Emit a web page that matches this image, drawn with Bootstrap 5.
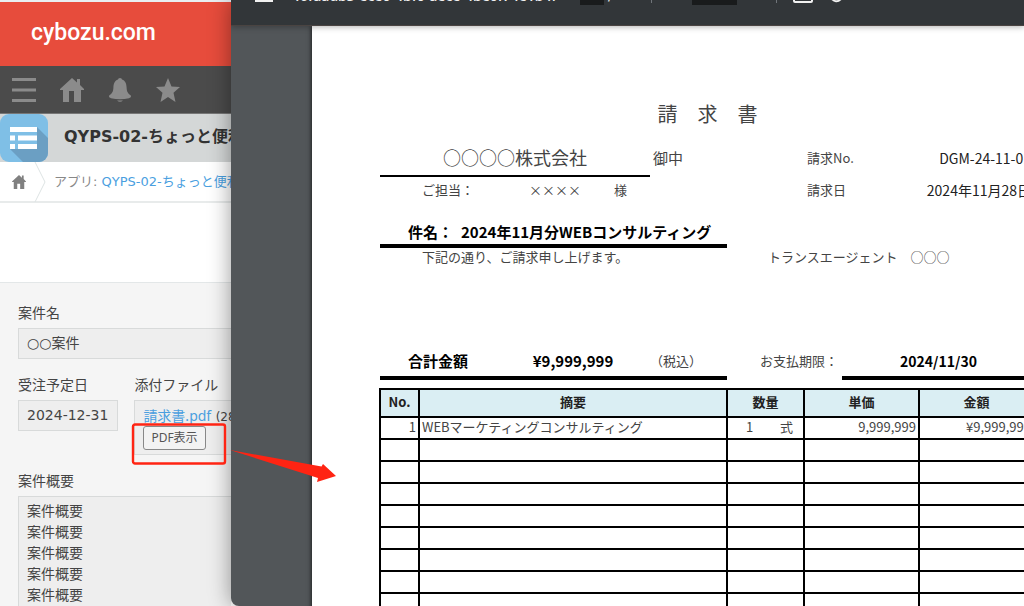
<!DOCTYPE html>
<html lang="ja">
<head>
<meta charset="utf-8">
<meta name="viewport" content="width=device-width, initial-scale=1">
<title>請求書 PDF表示</title>
<link href="https://cdn.jsdelivr.net/npm/bootstrap@5.3.0/dist/css/bootstrap.min.css" rel="stylesheet">
<style>
  body { font-family: "DejaVu Sans", "Noto Sans CJK JP", sans-serif; font-size: 14px; line-height: 21px; color: #333; }
  a { color: #4b9fdf; text-decoration: none; }

  /* app window behind */
  .app-pane { width: 231px; background: #fff; border-top: 2px solid #e9eef1; }
  .brand-bar { height: 64px; background: #e74c3c; font: 500 23px/62px Roboto, sans-serif; color: #fff; padding-left: 31px; }
  .icon-bar { height: 48px; background: #4b4b4b; border-bottom: 1px solid #777; padding-left: 12px; gap: 24px; }
  .icon-bar .btn, .icon-bar svg { width: 24px; height: 24px; display: block; }
  .title-bar { height: 48px; background: #d4d7d7; gap: 16px; }
  .title-bar h1 { font: 700 16px/24px "DejaVu Sans", "Noto Sans CJK JP", sans-serif; padding-bottom: 2px; }
  .crumbs { height: 41px; border-bottom: 2px solid #e8ebeb; font-size: 13px; color: #888; }
  .form-gap { height: 80px; border-bottom: 1px solid #e3e7e8; }
  .record { background: #f5f5f5; padding: 19px 0 0 18px; gap: 15px; color: #444; }
  .field-label { margin-bottom: 5px; font-family: "Noto Sans CJK JP", sans-serif; }
  .field-value { background: #eee; border: 1px solid #d8dada; padding: 4px 9px 4px 8px; }
  .field-value.wide { border-right: 0; }
  .file-row { height: 21px; }
  .file-link { font-family: "Noto Sans", "Noto Sans CJK JP", sans-serif; }
  .file-size { font-size: 12px; }
  .pdf-btn { display: block; height: 24px; padding: 0 7px; border: 1px solid #888; border-radius: 3px; background: #f3f3f3; color: #555; font: 12px/20px "Noto Sans", "Noto Sans CJK JP", sans-serif; }

  /* PDF viewer in front */
  .viewer { z-index: 1; background: #525659; border-radius: 0 0 0 8px; box-shadow: 0 0 22px rgba(0,0,0,.4); min-width: 0; }
  .viewer-bar { height: 56px; margin-top: -30px; background: #323639; border-bottom: 1px solid #4a4442; color: #f1f1f1; padding: 0 0 4px 24px; box-shadow: 0 1px 6px rgba(0,0,0,.3); z-index: 1; }
  .viewer-bar .doc-name { font: 600 14px/20px "Open Sans", sans-serif; width: 285px; margin-left: 20px; }
  .viewer-bar input { height: 18px; border: 0; background: #191b1c; color: #f1f1f1; font-size: 12px; text-align: center; padding: 0 0 6px; }
  .page-input { width: 24px; }
  .zoom-input { width: 45px; margin: 0 12px 0 40px; }
  .bar-rule { width: 1px; height: 14px; background: #70757a; }
  .bar-gap { margin-left: 38px; }
  .bar-btn { width: 20px; color: #f1f1f1; }
  .bar-btn svg { display: block; }

  /* invoice sheet */
  .sheet { margin-left: 81px; padding: 74px 0 0 68px; background: #fff; box-shadow: -1px 0 4px rgba(0,0,0,.6); font-family: "Noto Sans CJK JP", sans-serif; font-size: 13px; line-height: 18px; color: #444; min-width: 730px; }
  .doc-body { width: 655px; }
  .sheet h2 { font-size: 20px; line-height: 28px; font-weight: 400; white-space: pre; }
  .row-to { height: 35px; margin-top: 14px; }
  .row-to > div { padding-bottom: 4px; }
  .to-name { width: 270px; border-bottom: 2px solid #000; font-size: 18px; }
  .to-suffix { width: 157px; font-size: 15px; padding-left: 3px; }
  .row-person { height: 26px; padding-left: 42px; }
  .person-label { width: 107px; }
  .person-name { width: 85px; }
  .person-suffix { width: 193px; }
  .meta-value { padding-right: 4px; font-size: 14px; color: #222; }
  .half { width: 347px; }
  .row-subject { height: 26px; margin-top: 19px; padding: 0 0 2px 28px; border-bottom: 4px solid #000; font-size: 15px; color: #000; }
  .subject-label { width: 53px; }
  .note { padding-left: 42px; }
  .issuer { padding-left: 41px; white-space: pre; }
  .row-total { height: 32px; margin-top: 82px; }
  .row-total > .ruled { border-bottom: 4px solid #000; padding-bottom: 2px; }
  .total-label { width: 124px; padding-left: 28px; font-size: 15px; color: #000; }
  .total-value { width: 138px; font-size: 15px; color: #000; }
  .due-label { width: 115px; padding: 0 0 6px 33px; }
  .due-value { font-size: 14px; color: #000; }
  .items { table-layout: fixed; width: 656px; margin: 8px 0 0 -1px; border-collapse: collapse; color: #444; }
  .items th, .items td { border: 2px solid #000; height: 22px; padding: 0 2px 2px; line-height: 18px; }
  .items th { height: 28px; background: #daeef3; text-align: center; color: #222; font-size: 13px; }
  .c-no { width: 39px; } .c-desc { width: 308px; } .c-qty { width: 77px; } .c-unit { width: 115px; }

  /* callout drawn over both windows */
  .callout { left: 131px; top: 422px; z-index: 2; pointer-events: none; }
</style>
</head>
<body>
<div class="d-flex vh-100 overflow-hidden position-relative">

  <main class="app-pane d-flex flex-column flex-shrink-0 overflow-hidden text-nowrap">
    <div class="brand-bar flex-shrink-0">cybozu.com</div>
    <nav class="icon-bar d-flex align-items-center flex-shrink-0">
      <button class="btn border-0 p-0" type="button" aria-label="メニュー"><svg viewBox="0 0 24 24" fill="#8b8b8b"><path d="M0 0h24v3H0zM0 10.500h24v3H0zM0 21h24v3H0z"/></svg></button>
      <button class="btn border-0 p-0" type="button" aria-label="ホーム"><svg viewBox="0 0 24 24" fill="#8b8b8b"><path d="M12 0 0 11v1h3v12h6v-11h5v11h7V12h3v-1l-4-4V1h-3v3.500z"/></svg></button>
      <button class="btn border-0 p-0" type="button" aria-label="通知"><svg viewBox="0 0 24 24" fill="#8b8b8b"><path d="M10 1.500a2 1.500 0 0 1 4 0c3.600 1.300 4.500 4.500 4.600 8 .1 4.300 1.400 6 4.200 8 .6 1.500-.4 2.300-1.800 2.700-6 1.500-12 1.500-18 0C1.600 19.800.6 19 1.200 17.500c2.800-2 4.100-3.700 4.200-8 .1-3.500 1-6.700 4.600-8zM9 22.500h6q-3 2.500-6 0z"/></svg></button>
      <button class="btn border-0 p-0" type="button" aria-label="お気に入り"><svg viewBox="0 0 24 24" fill="#8b8b8b"><path d="m12 0 3.500 8.500 8.500.5-6.500 5.800L19.500 24 12 19l-7.500 5 2-9.200L0 9l8.500-.5z"/></svg></button>
    </nav>
    <div class="title-bar d-flex align-items-center flex-shrink-0">
      <svg class="flex-shrink-0" width="48" height="48" viewBox="0 0 48 48" aria-hidden="true"><defs><clipPath id="tile"><rect width="48" height="48" rx="9"/></clipPath></defs><g clip-path="url(#tile)"><path fill="#7fbfe6" d="M0 0h48v48H0z"/><path fill="#6b9fc3" d="m37 13 11 11v24H23L10 35h27z"/><path fill="#fff" d="M10 13h27v5H10zM10 21.500h5v5h-5zM18 21.500h19v5H18zM10 30h5v5h-5zM18 30h19v5H18z"/></g></svg>
      <h1 class="m-0">QYPS-02-ちょっと便利</h1>
    </div>
    <nav class="crumbs d-flex align-items-center flex-shrink-0">
      <a href="#" class="ps-2 ms-1 lh-1" aria-label="ホーム"><svg class="d-block" width="14" height="14" viewBox="0 0 24 24" fill="#808080"><path d="M12 0 0 11v1h3v12h6v-9h5v9h7V12h3v-1l-4-4V1h-3v3.500z"/></svg></a>
      <svg class="mx-2 flex-shrink-0" width="12" height="40" viewBox="0 0 12 40" fill="none" stroke="#dde3e3" aria-hidden="true"><path d="m1 0 10 20L1 40"/></svg>
      <span>アプリ: <a href="#">QYPS-02-ちょっと便利</a></span>
    </nav>
    <div class="form-gap flex-shrink-0"></div>
    <section class="record d-flex flex-column flex-grow-1">
      <div>
        <div class="field-label">案件名</div>
        <div class="field-value wide">○○案件</div>
      </div>
      <div class="d-flex gap-3">
        <div>
          <div class="field-label">受注予定日</div>
          <div class="field-value">2024-12-31</div>
        </div>
        <div class="flex-grow-1">
          <div class="field-label">添付ファイル</div>
          <div class="field-value wide">
            <div class="file-row"><a class="file-link" href="#">請求書.pdf</a> <span class="file-size">(28 KB)</span></div>
            <button class="pdf-btn" type="button">PDF表示</button>
          </div>
        </div>
      </div>
      <div class="flex-grow-1 d-flex flex-column">
        <div class="field-label">案件概要</div>
        <div class="field-value wide flex-grow-1">案件概要<br>案件概要<br>案件概要<br>案件概要<br>案件概要</div>
      </div>
    </section>
  </main>

  <div class="viewer flex-grow-1 d-flex flex-column overflow-hidden position-relative">
    <header class="viewer-bar d-flex align-items-center flex-shrink-0 position-relative text-nowrap">
      <button class="btn border-0 p-0 bar-btn" type="button" aria-label="メニュー"><svg width="18" height="12" viewBox="0 0 18 12" fill="currentColor"><path d="M0 0h18v2H0zM0 5h18v2H0zM0 10h18v2H0z"/></svg></button>
      <div class="doc-name">f6faadb3-ece0-4bf0-aece-4be0f74e1b4f</div>
      <input class="page-input" type="text" value="1" aria-label="ページ"><span class="ms-1">/</span>
      <div class="bar-rule bar-gap"></div>
      <input class="zoom-input" type="text" value="100%" aria-label="ズーム">
      <span>+</span>
      <div class="bar-rule ms-3 me-3"></div>
      <button class="btn border-0 p-0 bar-btn" type="button" aria-label="ページに合わせる"><svg width="20" height="14" viewBox="0 0 20 14" fill="none" stroke="currentColor" stroke-width="2"><rect x="1" y="1" width="18" height="12" rx="1"/></svg></button>
      <button class="btn border-0 p-0 bar-btn ms-3" type="button" aria-label="回転"><svg width="16" height="14" viewBox="0 0 16 14" fill="none" stroke="currentColor" stroke-width="2"><path d="M2 9q5 6 10 1t-2-8"/></svg></button>
    </header>

    <article class="sheet flex-grow-1 text-nowrap">
      <div class="doc-body">
        <h2 class="m-0 text-center">請　求　書</h2>
        <div class="row-to d-flex">
          <div class="to-name d-flex align-items-center justify-content-center">○○○○株式会社</div>
          <div class="to-suffix d-flex align-items-center">御中</div>
          <div class="flex-grow-1 d-flex align-items-center justify-content-between"><span>請求No.</span><span class="meta-value">DGM-24-11-01</span></div>
        </div>
        <div class="row-person d-flex align-items-center">
          <div class="person-label">ご担当：</div>
          <div class="person-name">××××</div>
          <div class="person-suffix">様</div>
          <div class="flex-grow-1 d-flex justify-content-between"><span>請求日</span><span class="meta-value">2024年11月28日</span></div>
        </div>
        <div class="row-subject half d-flex align-items-center fw-bold"><span class="subject-label">件名：</span><span>2024年11月分WEBコンサルティング</span></div>
        <div class="d-flex">
          <div class="half note">下記の通り、ご請求申し上げます。</div>
          <div class="issuer">トランスエージェント　○○○</div>
        </div>
        <div class="row-total d-flex">
          <div class="half ruled d-flex align-items-center">
            <strong class="total-label">合計金額</strong>
            <strong class="total-value text-center">¥9,999,999</strong>
            <span class="ps-2">（税込）</span>
          </div>
          <div class="due-label d-flex align-items-center">お支払期限：</div>
          <div class="due-value ruled flex-grow-1 d-flex align-items-center justify-content-center fw-bold">2024/11/30</div>
        </div>
        <table class="items">
          <colgroup><col class="c-no"><col class="c-desc"><col class="c-qty"><col class="c-unit"><col></colgroup>
          <thead><tr><th>No.</th><th>摘要</th><th>数量</th><th>単価</th><th>金額</th></tr></thead>
          <tbody>
            <tr><td class="text-end">1</td><td>WEBマーケティングコンサルティング</td><td><div class="d-flex justify-content-between ps-3 pe-2"><span>1</span><span>式</span></div></td><td class="text-end">9,999,999</td><td class="text-end">¥9,999,999</td></tr>
            <tr><td></td><td></td><td></td><td></td><td></td></tr>
            <tr><td></td><td></td><td></td><td></td><td></td></tr>
            <tr><td></td><td></td><td></td><td></td><td></td></tr>
            <tr><td></td><td></td><td></td><td></td><td></td></tr>
            <tr><td></td><td></td><td></td><td></td><td></td></tr>
            <tr><td></td><td></td><td></td><td></td><td></td></tr>
            <tr><td></td><td></td><td></td><td></td><td></td></tr>
            <tr><td></td><td></td><td></td><td></td><td></td></tr>
          </tbody>
        </table>
      </div>
    </article>
  </div>

  <svg class="callout position-absolute" width="208" height="60" viewBox="0 0 208 60" aria-hidden="true"><rect x="2" y="2.500" width="92" height="39" rx="2" fill="none" stroke="#ff2413" stroke-width="2.400"/><path fill="#ff2413" d="m99 28 91.500 16.500L192 42l13 12-19 6 1-4z"/></svg>
</div>
<script src="https://cdn.jsdelivr.net/npm/bootstrap@5.3.0/dist/js/bootstrap.bundle.min.js"></script>
</body>
</html>
